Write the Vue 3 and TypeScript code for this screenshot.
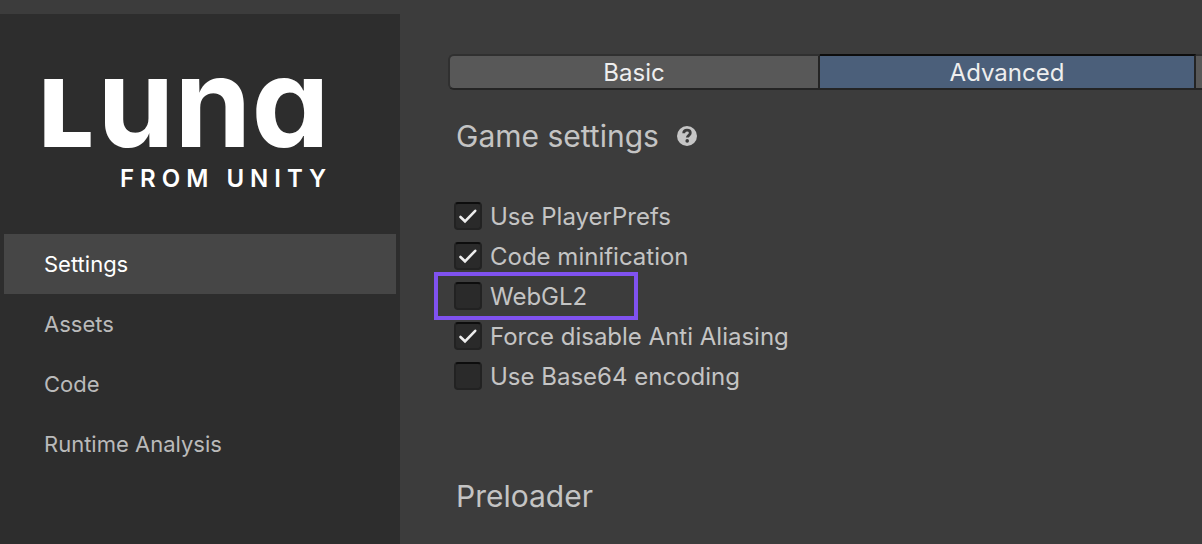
<script setup lang="ts">
import { ref } from 'vue'

interface Option {
  id: string
  label: string
  checked: boolean
  highlighted?: boolean
}

const navItems: string[] = ['Settings', 'Assets', 'Code', 'Runtime Analysis']
const activeNav = ref('Settings')

const activeTab = ref('Advanced')

const options = ref<Option[]>([
  { id: 'player-prefs', label: 'Use PlayerPrefs', checked: true },
  { id: 'minification', label: 'Code minification', checked: true },
  { id: 'webgl2', label: 'WebGL2', checked: false, highlighted: true },
  { id: 'anti-aliasing', label: 'Force disable Anti Aliasing', checked: true },
  { id: 'base64', label: 'Use Base64 encoding', checked: false },
])
</script>

<template>
  <div class="window">
    <aside class="sidebar">
      <div class="logo">
        <div class="wordmark"><span class="cap">L</span><span class="rest">una</span></div>
        <div class="tagline">FROM UNITY</div>
      </div>
      <nav class="nav">
        <a
          v-for="item in navItems"
          :key="item"
          href="#"
          class="nav-item"
          :class="{ active: item === activeNav }"
          @click.prevent="activeNav = item"
        >{{ item }}</a>
      </nav>
    </aside>

    <main class="content">
      <div class="tabs">
        <button type="button" class="tab first" :class="{ active: activeTab === 'Basic' }" @click="activeTab = 'Basic'">Basic</button>
        <button type="button" class="tab" :class="{ active: activeTab === 'Advanced' }" @click="activeTab = 'Advanced'">Advanced</button>
        <button type="button" class="tab" aria-label="More"></button>
      </div>

      <section>
        <div class="heading-row">
          <h2>Game settings</h2>
          <button type="button" class="help" aria-label="Help">
            <svg viewBox="0 0 20 20" width="20" height="20" aria-hidden="true">
              <circle cx="10" cy="10" r="10" fill="#c6c6c6" />
              <path d="M6.7 7.3C6.7 5.2 8.2 4.1 10 4.1c1.9 0 3.3 1.1 3.3 2.8 0 2.4-3 2.4-3 4.7" fill="none" stroke="#3c3c3c" stroke-width="2.8" />
              <circle cx="10.2" cy="14.9" r="1.8" fill="#3c3c3c" />
            </svg>
          </button>
        </div>

        <ul class="options">
          <li v-for="option in options" :key="option.id" class="option">
            <span class="box">
              <input :id="option.id" v-model="option.checked" type="checkbox" />
              <svg v-if="option.checked" class="tick" viewBox="0 0 28 28" aria-hidden="true">
                <path d="M6.5 15 11 19.3 21.2 8.8" fill="none" stroke="#eeeeee" stroke-width="2.6" stroke-linecap="round" />
              </svg>
            </span>
            <label :for="option.id">{{ option.label }}</label>
            <span v-if="option.highlighted" class="highlight"></span>
          </li>
        </ul>
      </section>

      <section class="preloader">
        <h2>Preloader</h2>
      </section>
    </main>
  </div>
</template>

<style>
body {
  background: #3c3c3c;
}
</style>

<style scoped>
.window {
  box-sizing: border-box;
  display: grid;
  grid-template-columns: 400px minmax(0, 1fr);
  min-height: 100vh;
  padding-top: 14px;
  overflow: hidden;
  background: #3c3c3c;
  color: #c4c4c4;
  font-family: Inter, "Liberation Sans", sans-serif;
}

.sidebar {
  padding: 50px 4px 0;
  background: #2d2d2d;
}

.logo {
  box-sizing: border-box;
  height: 170px;
  padding-left: 36px;
  color: #ffffff;
}

.wordmark {
  display: flex;
  align-items: baseline;
  gap: 4px;
  height: 76px;
  line-height: 76px;
  white-space: nowrap;
}

.cap {
  font-size: 94px;
  font-weight: 900;
}

.rest {
  font-size: 124px;
  font-weight: 700;
  font-feature-settings: "cv11";
}

.tagline {
  margin-top: 24px;
  padding-left: 80px;
  font-size: 24px;
  font-weight: 600;
  line-height: 30px;
  letter-spacing: 6px;
  white-space: nowrap;
}

.nav {
  display: flex;
  flex-direction: column;
}

.nav-item {
  padding-left: 40px;
  font-size: 22px;
  line-height: 60px;
  color: #bababa;
  text-decoration: none;
}

.nav-item.active {
  background: #464646;
  color: #ffffff;
}

.content {
  min-width: 0;
  padding: 40px 0 0 48px;
}

.tabs {
  display: flex;
  overflow: hidden;
}

.tab {
  box-sizing: border-box;
  flex: 0 0 calc(50% - 1px);
  height: 36px;
  padding: 2px 0 0;
  border: solid #242424;
  border-width: 2px 2px 2px 0;
  border-top-color: #303030;
  background: #585858;
  color: #eeeeee;
  font-family: inherit;
  font-size: 24px;
  line-height: 30px;
}

.tab.first {
  flex-basis: calc(50% - 5px);
  border-left: 2px solid #303030;
  border-radius: 6px 0 0 6px;
}

.tab.active {
  border-top-color: #0d0d0d;
  background: #4b5f7a;
}

.heading-row {
  display: flex;
  align-items: center;
  gap: 18px;
  margin-top: 26px;
}

h2 {
  margin: 0;
  padding-left: 8px;
  font-size: 30px;
  font-weight: 400;
  line-height: 40px;
}

.help {
  display: flex;
  padding: 0;
  border: 0;
  background: none;
}

.options {
  margin: 40px 0 0;
  padding: 0 0 0 6px;
  list-style: none;
}

.option {
  position: relative;
  display: flex;
  align-items: center;
  gap: 8px;
  height: 40px;
  font-size: 24px;
  line-height: 38px;
}

.option label {
  padding-top: 2px;
}

.box {
  position: relative;
  display: flex;
}

input {
  box-sizing: border-box;
  width: 28px;
  height: 28px;
  margin: 0;
  border: 2px solid #222222;
  border-top-color: #0d0d0d;
  border-radius: 4px;
  background: #2a2a2a;
  appearance: none;
}

.tick {
  position: absolute;
  inset: 0;
  pointer-events: none;
}

.highlight {
  position: absolute;
  box-sizing: border-box;
  top: -4px;
  left: -20px;
  width: 204px;
  height: 48px;
  border: 4px solid #8052f0;
  pointer-events: none;
}

.preloader {
  margin-top: 80px;
}
</style>
